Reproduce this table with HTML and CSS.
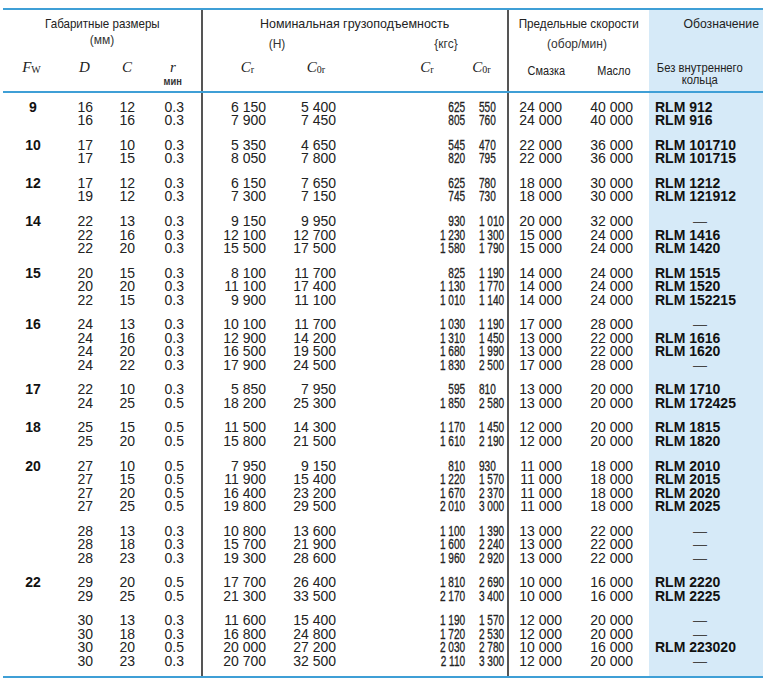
FILE: index.html
```html
<!DOCTYPE html>
<html lang="ru">
<head>
<meta charset="utf-8">
<title>RLM</title>
<link rel="stylesheet" href="styles.css">
</head>
<body>
<div class="tbl">
  <div class="head">
    <div class="hb hb-a">
      <div class="ttl"><span class="cn cn-a">Габаритные размеры</span></div>
      <div class="unit unit-a">(мм)</div>
      <div class="syms syms-a">
        <div class="s a1"><span class="sym">F<sub>W</sub></span></div>
        <div class="s a2"><span class="sym">D</span></div>
        <div class="s a3"><span class="sym">C</span></div>
        <div class="s a4"><span class="sym">r</span><span class="min"><span class="cn cn-m">мин</span></span></div>
      </div>
    </div>
    <div class="hb hb-b">
      <div class="ttl"><span class="cn cn-b">Номинальная грузоподъемность</span></div>
      <div class="units-b">
        <div class="unit u-n">(Н)</div>
        <div class="unit u-k">{кгс}</div>
      </div>
      <div class="syms syms-b">
        <div class="s b1"><span class="sym">C<sub>r</sub></span></div>
        <div class="s b2"><span class="sym">C<sub>0r</sub></span></div>
        <div class="s b3"><span class="sym">C<sub>r</sub></span></div>
        <div class="s b4"><span class="sym">C<sub>0r</sub></span></div>
      </div>
    </div>
    <div class="hb hb-c">
      <div class="ttl"><span class="cn cn-c">Предельные скорости</span></div>
      <div class="unit unit-c">(обор/мин)</div>
      <div class="syms syms-c">
        <div class="s cc1"><span class="cn cn-s">Смазка</span></div>
        <div class="s cc2"><span class="cn cn-s">Масло</span></div>
      </div>
    </div>
    <div class="hb hb-d">
      <div class="ttl ttl-d"><span class="cn cn-d">Обозначение</span></div>
      <div class="dsub"><span class="cn cn-e">Без внутреннего<br>кольца</span></div>
    </div>
  </div>

  <div class="body">
    <div class="grp">
      <div class="c c1">9</div>
      <div class="c c2">16<br>16</div>
      <div class="c c3">12<br>16</div>
      <div class="c c4">0.3<br>0.3</div>
      <div class="c c5">6 150<br>7 900</div>
      <div class="c c6">5 400<br>7 450</div>
      <div class="c c7">625<br>805</div>
      <div class="c c8">550<br>760</div>
      <div class="c c9">24 000<br>24 000</div>
      <div class="c c10">40 000<br>40 000</div>
      <div class="c c11"><b>RLM 912</b><b>RLM 916</b></div>
    </div>
    <div class="grp">
      <div class="c c1">10</div>
      <div class="c c2">17<br>17</div>
      <div class="c c3">10<br>15</div>
      <div class="c c4">0.3<br>0.3</div>
      <div class="c c5">5 350<br>8 050</div>
      <div class="c c6">4 650<br>7 800</div>
      <div class="c c7">545<br>820</div>
      <div class="c c8">470<br>795</div>
      <div class="c c9">22 000<br>22 000</div>
      <div class="c c10">36 000<br>36 000</div>
      <div class="c c11"><b>RLM 101710</b><b>RLM 101715</b></div>
    </div>
    <div class="grp">
      <div class="c c1">12</div>
      <div class="c c2">17<br>19</div>
      <div class="c c3">12<br>12</div>
      <div class="c c4">0.3<br>0.3</div>
      <div class="c c5">6 150<br>7 300</div>
      <div class="c c6">7 650<br>7 150</div>
      <div class="c c7">625<br>745</div>
      <div class="c c8">780<br>730</div>
      <div class="c c9">18 000<br>18 000</div>
      <div class="c c10">30 000<br>30 000</div>
      <div class="c c11"><b>RLM 1212</b><b>RLM 121912</b></div>
    </div>
    <div class="grp">
      <div class="c c1">14</div>
      <div class="c c2">22<br>22<br>22</div>
      <div class="c c3">13<br>16<br>20</div>
      <div class="c c4">0.3<br>0.3<br>0.3</div>
      <div class="c c5">9 150<br>12 100<br>15 500</div>
      <div class="c c6">9 950<br>12 700<br>17 500</div>
      <div class="c c7">930<br>1 230<br>1 580</div>
      <div class="c c8">1 010<br>1 300<br>1 790</div>
      <div class="c c9">20 000<br>15 000<br>15 000</div>
      <div class="c c10">32 000<br>24 000<br>24 000</div>
      <div class="c c11"><span class="none">—</span><b>RLM 1416</b><b>RLM 1420</b></div>
    </div>
    <div class="grp">
      <div class="c c1">15</div>
      <div class="c c2">20<br>20<br>22</div>
      <div class="c c3">15<br>20<br>15</div>
      <div class="c c4">0.3<br>0.3<br>0.3</div>
      <div class="c c5">8 100<br>11 100<br>9 900</div>
      <div class="c c6">11 700<br>17 400<br>11 100</div>
      <div class="c c7">825<br>1 130<br>1 010</div>
      <div class="c c8">1 190<br>1 770<br>1 140</div>
      <div class="c c9">14 000<br>14 000<br>14 000</div>
      <div class="c c10">24 000<br>24 000<br>24 000</div>
      <div class="c c11"><b>RLM 1515</b><b>RLM 1520</b><b>RLM 152215</b></div>
    </div>
    <div class="grp">
      <div class="c c1">16</div>
      <div class="c c2">24<br>24<br>24<br>24</div>
      <div class="c c3">13<br>16<br>20<br>22</div>
      <div class="c c4">0.3<br>0.3<br>0.3<br>0.3</div>
      <div class="c c5">10 100<br>12 900<br>16 500<br>17 900</div>
      <div class="c c6">11 700<br>14 200<br>19 500<br>24 500</div>
      <div class="c c7">1 030<br>1 310<br>1 680<br>1 830</div>
      <div class="c c8">1 190<br>1 450<br>1 990<br>2 500</div>
      <div class="c c9">17 000<br>13 000<br>13 000<br>17 000</div>
      <div class="c c10">28 000<br>22 000<br>22 000<br>28 000</div>
      <div class="c c11"><span class="none">—</span><b>RLM 1616</b><b>RLM 1620</b><span class="none">—</span></div>
    </div>
    <div class="grp">
      <div class="c c1">17</div>
      <div class="c c2">22<br>24</div>
      <div class="c c3">10<br>25</div>
      <div class="c c4">0.3<br>0.5</div>
      <div class="c c5">5 850<br>18 200</div>
      <div class="c c6">7 950<br>25 300</div>
      <div class="c c7">595<br>1 850</div>
      <div class="c c8">810<br>2 580</div>
      <div class="c c9">13 000<br>13 000</div>
      <div class="c c10">20 000<br>20 000</div>
      <div class="c c11"><b>RLM 1710</b><b>RLM 172425</b></div>
    </div>
    <div class="grp">
      <div class="c c1">18</div>
      <div class="c c2">25<br>25</div>
      <div class="c c3">15<br>20</div>
      <div class="c c4">0.5<br>0.5</div>
      <div class="c c5">11 500<br>15 800</div>
      <div class="c c6">14 300<br>21 500</div>
      <div class="c c7">1 170<br>1 610</div>
      <div class="c c8">1 450<br>2 190</div>
      <div class="c c9">12 000<br>12 000</div>
      <div class="c c10">20 000<br>20 000</div>
      <div class="c c11"><b>RLM 1815</b><b>RLM 1820</b></div>
    </div>
    <div class="grp">
      <div class="c c1">20</div>
      <div class="c c2">27<br>27<br>27<br>27</div>
      <div class="c c3">10<br>15<br>20<br>25</div>
      <div class="c c4">0.5<br>0.5<br>0.5<br>0.5</div>
      <div class="c c5">7 950<br>11 900<br>16 400<br>19 800</div>
      <div class="c c6">9 150<br>15 400<br>23 200<br>29 500</div>
      <div class="c c7">810<br>1 220<br>1 670<br>2 010</div>
      <div class="c c8">930<br>1 570<br>2 370<br>3 000</div>
      <div class="c c9">11 000<br>11 000<br>11 000<br>11 000</div>
      <div class="c c10">18 000<br>18 000<br>18 000<br>18 000</div>
      <div class="c c11"><b>RLM 2010</b><b>RLM 2015</b><b>RLM 2020</b><b>RLM 2025</b></div>
    </div>
    <div class="grp">
      <div class="c c1"></div>
      <div class="c c2">28<br>28<br>28</div>
      <div class="c c3">13<br>18<br>23</div>
      <div class="c c4">0.3<br>0.3<br>0.3</div>
      <div class="c c5">10 800<br>15 700<br>19 300</div>
      <div class="c c6">13 600<br>21 900<br>28 600</div>
      <div class="c c7">1 100<br>1 600<br>1 960</div>
      <div class="c c8">1 390<br>2 240<br>2 920</div>
      <div class="c c9">13 000<br>13 000<br>13 000</div>
      <div class="c c10">22 000<br>22 000<br>22 000</div>
      <div class="c c11"><span class="none">—</span><span class="none">—</span><span class="none">—</span></div>
    </div>
    <div class="grp">
      <div class="c c1">22</div>
      <div class="c c2">29<br>29</div>
      <div class="c c3">20<br>25</div>
      <div class="c c4">0.5<br>0.5</div>
      <div class="c c5">17 700<br>21 300</div>
      <div class="c c6">26 400<br>33 500</div>
      <div class="c c7">1 810<br>2 170</div>
      <div class="c c8">2 690<br>3 400</div>
      <div class="c c9">10 000<br>10 000</div>
      <div class="c c10">16 000<br>16 000</div>
      <div class="c c11"><b>RLM 2220</b><b>RLM 2225</b></div>
    </div>
    <div class="grp">
      <div class="c c1"></div>
      <div class="c c2">30<br>30<br>30<br>30</div>
      <div class="c c3">13<br>18<br>20<br>23</div>
      <div class="c c4">0.3<br>0.3<br>0.5<br>0.3</div>
      <div class="c c5">11 600<br>16 800<br>20 000<br>20 700</div>
      <div class="c c6">15 400<br>24 800<br>27 200<br>32 500</div>
      <div class="c c7">1 190<br>1 720<br>2 030<br>2 110</div>
      <div class="c c8">1 570<br>2 530<br>2 780<br>3 300</div>
      <div class="c c9">12 000<br>12 000<br>10 000<br>12 000</div>
      <div class="c c10">20 000<br>20 000<br>16 000<br>20 000</div>
      <div class="c c11"><span class="none">—</span><span class="none">—</span><b>RLM 223020</b><span class="none">—</span></div>
    </div>
  </div>
</div>
</body>
</html>
```

FILE: styles.css
```css
html, body {
  margin: 0;
  padding: 0;
  background: #ffffff;
  overflow: hidden;
}
body {
  font-family: "Liberation Sans", Arial, sans-serif;
  color: #1e1e1e;
}
.tbl {
  margin: 8px 0 0 3px;
  width: 760px;
  border-top: 2px solid #3f9fd6;
  border-bottom: 2px solid #3f9fd6;
}
.head {
  display: grid;
  grid-template-columns: 198px 306px 142px 114px;
  height: 81px;
  border-bottom: 2px solid #3f9fd6;
}
.hb {
  box-sizing: border-box;
  padding-top: 6px;
}
.hb-b, .hb-c {
  border-left: 2px solid #555555;
}
.hb-d {
  background: #d6eaf8;
}
.cn {
  display: inline-block;
  transform-origin: 50% 50%;
}
.cn-a { transform: scaleX(0.89); }
.cn-b { transform: scaleX(0.96); }
.cn-c { transform: scaleX(0.9); }
.cn-d { transform: scaleX(0.94); }
.cn-s { transform: scaleX(0.84); }
.cn-e { transform: scaleX(0.9); }
.cn-m { transform: scaleX(0.85); }
.ttl {
  font-size: 13px;
  line-height: 16px;
  text-align: center;
  white-space: nowrap;
  color: #222;
}
.ttl-d {
  padding-left: 30px;
}
.unit {
  font-size: 12px;
  line-height: 12px;
  text-align: center;
  color: #333;
  white-space: nowrap;
}
.unit-a { margin-top: 1.5px; }
.unit-c { margin-top: 6px; padding-right: 4px; }
.units-b {
  display: grid;
  grid-template-columns: 136px 168px;
  margin-top: 5.8px;
}
.u-n { padding-left: 12px; }
.u-k { padding-left: 46px; }
.syms {
  display: grid;
}
.syms-a {
  grid-template-columns: 60px 33px 42px 63px;
  margin-top: 12.5px;
}
.syms-b {
  grid-template-columns: 66px 70px 129px 39px;
  margin-top: 8.2px;
}
.syms-c {
  grid-template-columns: 56px 84px;
  margin-top: 12.5px;
}
.s {
  text-align: center;
  line-height: 18px;
  white-space: nowrap;
}
.sym {
  font-family: "Liberation Serif", "Times New Roman", serif;
  font-style: italic;
  font-size: 15px;
  color: #222;
}
.sym sub {
  font-style: normal;
  font-size: 10px;
  line-height: 0;
  vertical-align: -1px;
}
.a1 { padding-right: 3px; }
.a2 { padding-left: 10px; }
.a3 { padding-left: 20px; }
.a4 { padding-left: 24px; padding-right: 17px; }
.min {
  display: block;
  font-weight: bold;
  font-size: 11px;
  line-height: 11px;
  color: #333;
}
.b1 { padding-left: 23px; }
.b2 { padding-left: 24px; }
.b3 { padding-left: 47px; }
.b4 { padding-right: 12px; }
.syms-c .s {
  font-size: 13px;
  line-height: 16px;
  color: #222;
}
.cc1 { padding-left: 15px; }
.cc2 { padding-left: 14px; }
.dsub {
  margin-top: 30.3px;
  padding-right: 12px;
  text-align: center;
  font-size: 12.5px;
  line-height: 12px;
  color: #222;
  white-space: nowrap;
}

.grp {
  display: grid;
  grid-template-columns: 60px 33px 42px 63px 68px 70px 129px 39px 58px 84px 114px;
}
.c {
  box-sizing: border-box;
  padding-top: 11.1px;
  font-size: 14px;
  line-height: 13.5px;
  text-align: right;
  white-space: nowrap;
  color: #222;
}
.grp:first-child .c { padding-top: 7.75px; }
.grp:last-child .c { padding-bottom: 7.5px; }
.c1 { text-align: center; font-weight: bold; color: #111; }
.c2, .c3, .c5, .c6, .c9 { padding-right: 3px; }
.c4 { padding-right: 17px; }
.c5, .c9 { border-left: 2px solid #555555; }
.c7, .c8 {
  transform: scaleX(0.72);
  transform-origin: 100% 0;
  -webkit-text-stroke: 0.3px #222;
}
.c7 { padding-right: 4px; }
.c8 { padding-right: 20px; }
.c10 { padding-right: 16px; }
.c11 {
  background: #d6eaf8;
  text-align: left;
}
.c11 b {
  display: block;
  padding-left: 6px;
  color: #111;
}
.c11 .none {
  display: block;
  text-align: center;
  padding-right: 12px;
  color: #444;
}
```
